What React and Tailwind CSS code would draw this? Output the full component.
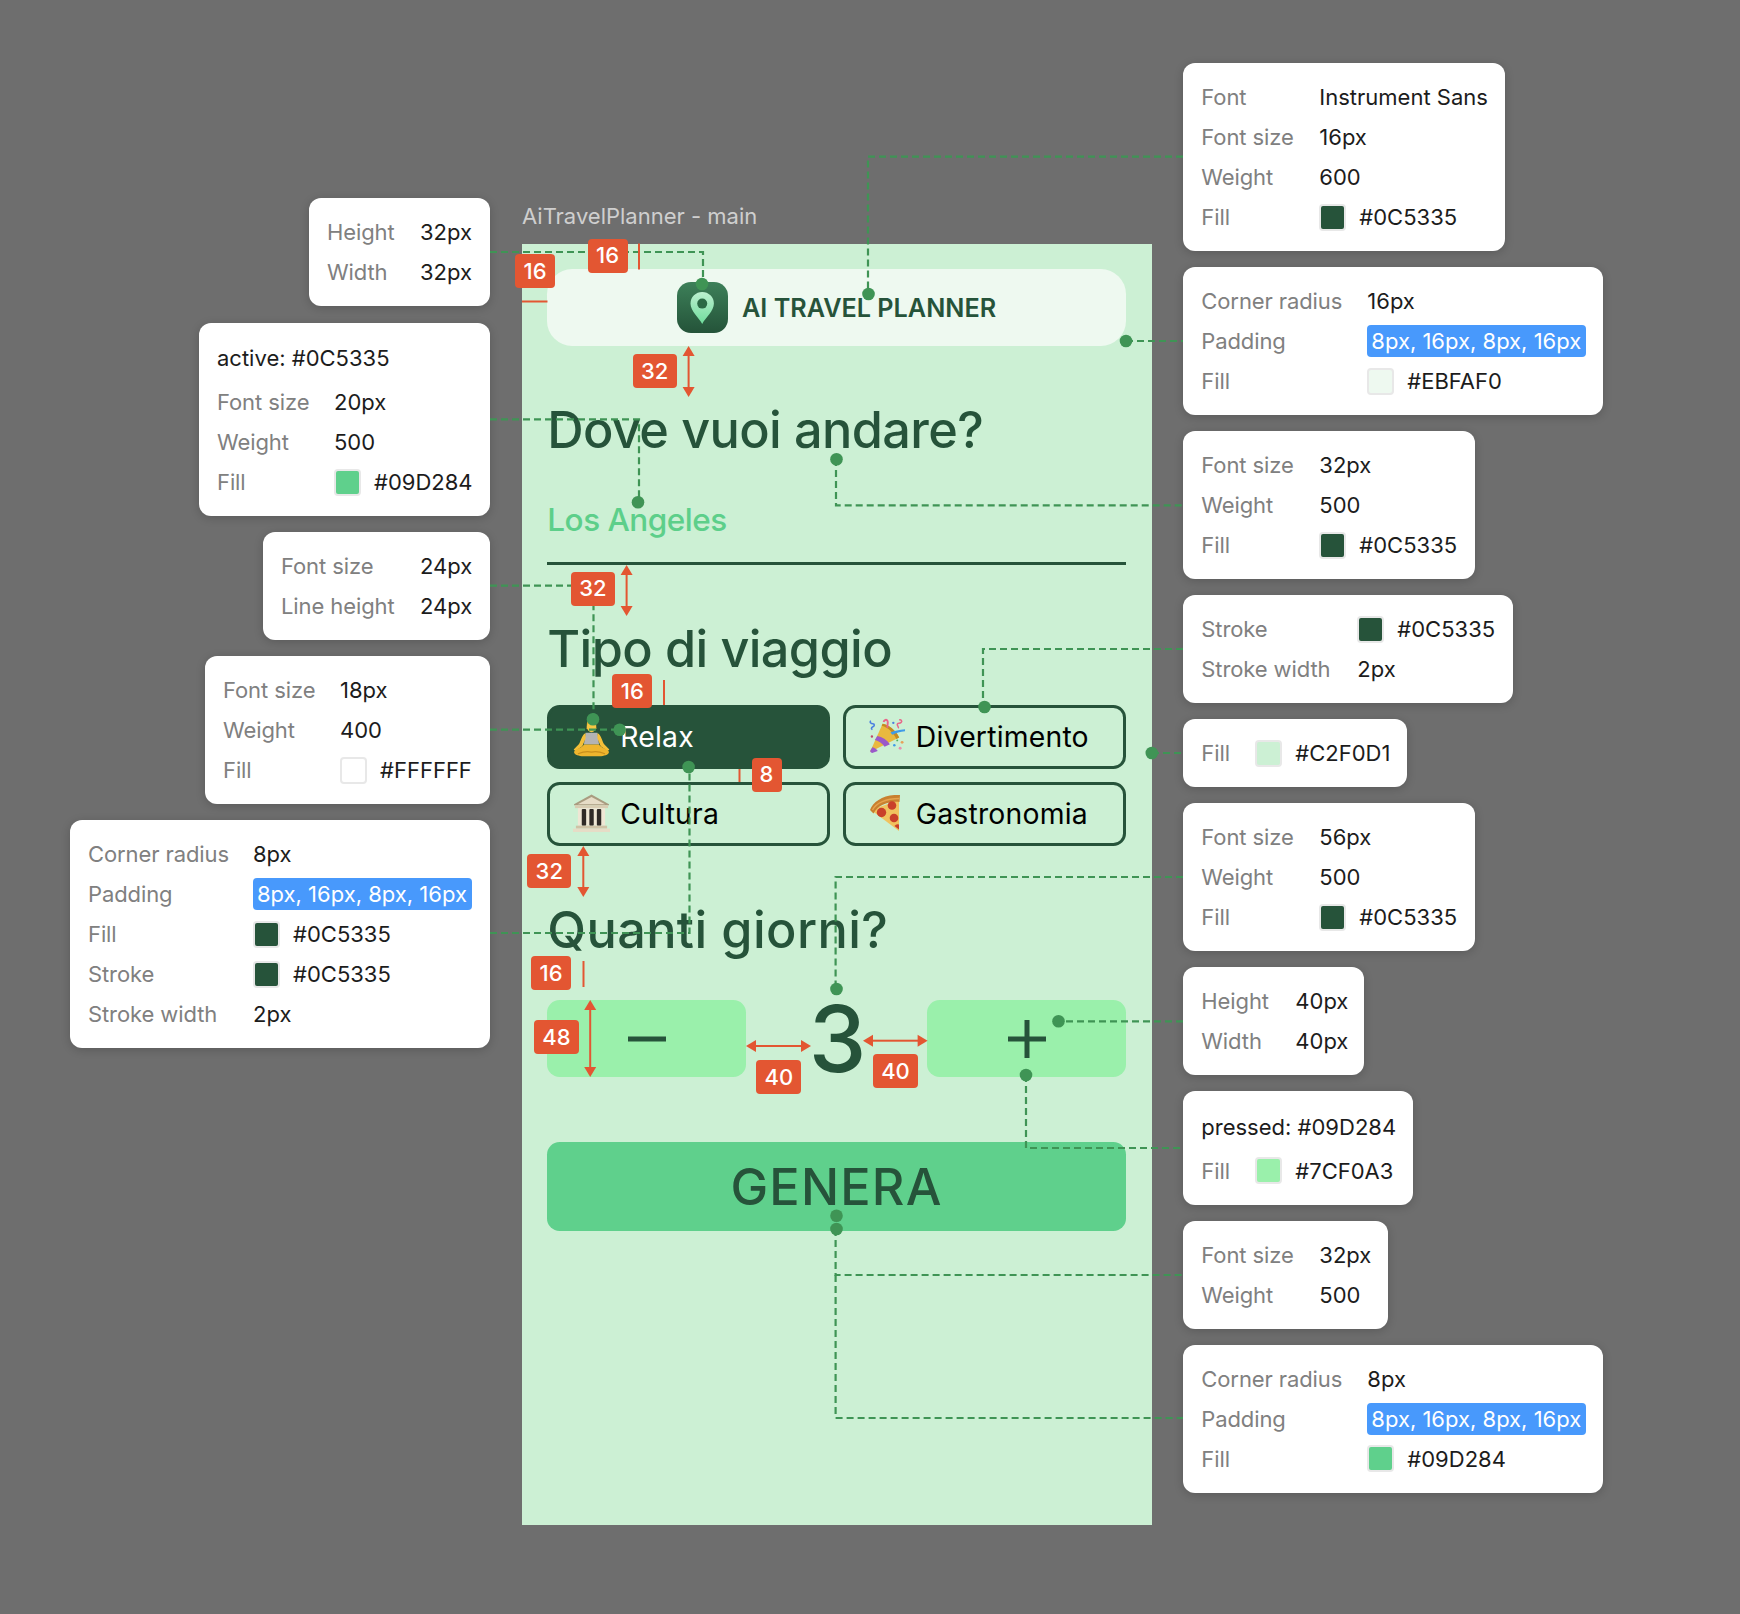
import React from "react";

const INK = "text-[#26533a]";

function Row({ label, children }) {
  return (
    <>
      <span className="tracking-[-0.1px] text-[#808080]">{label}</span>
      <span className="flex items-center whitespace-nowrap text-[#1c1c1c]">{children}</span>
    </>
  );
}

function Swatch({ className }) {
  return <span className={"mr-[13px] h-[27px] w-[27px] rounded-[4px] border-2 border-[#e8e8e8] " + className} />;
}

function Hl() {
  return (
    <span className="flex h-[32px] w-[219px] items-center rounded-[4px] bg-[#4899fc] px-[4px] text-white">
      8px, 16px, 8px, 16px
    </span>
  );
}

function Card({ className, grid, head, children }) {
  return (
    <div className={"rounded-[12px] bg-white px-[18px] py-[14px] text-[22px] leading-[40px] shadow-[0_2px_10px_rgba(0,0,0,0.18)] " + className}>
      {head && <div className="mb-[4px] mt-[1.500px] whitespace-nowrap text-[#1c1c1c]">{head}</div>}
      <div className={"grid auto-rows-[40px] items-center " + grid}>{children}</div>
    </div>
  );
}

function PinIcon() {
  return (
    <svg width="51" height="51" viewBox="0 0 51 51">
      <defs>
        <linearGradient id="ig" x1="0" y1="0" x2="0" y2="1">
          <stop offset="0" stopColor="#3d8059" />
          <stop offset="1" stopColor="#245339" />
        </linearGradient>
        <linearGradient id="pg" x1="0" y1="0" x2="0" y2="1">
          <stop offset="0" stopColor="#bdf0d0" />
          <stop offset="1" stopColor="#6fdc9c" />
        </linearGradient>
      </defs>
      <rect width="51" height="51" rx="14" fill="url(#ig)" />
      <path d="M25.2 42C22 36 13.5 29 13.5 21.6a11.7 11.7 0 0 1 23.4 0C36.9 29 28.4 36 25.2 42Z" fill="url(#pg)" />
      <circle cx="25.2" cy="21.6" r="5" fill="#2b6a45" />
    </svg>
  );
}

function Meditate() {
  return (
    <svg width="37" height="40" viewBox="2 0 33 37">
      <path d="M14.500 3c0-2.500 8-2.500 8 0l.6 8h-9.200z" fill="#e3ac2d" />
      <ellipse cx="18.500" cy="9" rx="4.200" ry="5" fill="#f6c744" />
      <path d="M13 14.500h11l1.500 11h-14z" fill="#b3b3b3" />
      <path d="M13 15c-3 1-4 6-6 10l-5 5 1.500 1.500 6.500-4.500 3-7zM24 15c3 1 4 6 6 10l5 5-1.500 1.500-6.500-4.500-3-7z" fill="#f4bf38" />
      <path d="M11.500 25.500h14c1 3 8 4 9 6.500 .8 2.500-3 4-7 4.200H9.500c-4 -.2-7.800-1.700-7-4.200 1-2.500 8-3.500 9-6.500z" fill="#eeb52e" />
      <path d="M6 34c5-2 9-2.500 12.500-1.500 3.500-1 7.500-.5 12.500 1.500" fill="none" stroke="#c98f1c" strokeWidth="1" />
    </svg>
  );
}

function Temple() {
  return (
    <svg width="38" height="39" viewBox="0 0 38 39">
      <path d="M19 0 37 10v1H1v-1z" fill="#a99c80" />
      <path d="M19 2.500 33 10H5z" fill="#e6dcc6" />
      <rect x="2" y="11" width="34" height="3" fill="#d9cdb3" />
      <rect x="5" y="14" width="28" height="18" fill="#eee6d4" />
      <rect x="9" y="15" width="4.500" height="17" rx="1" fill="#2f2a26" />
      <rect x="16.800" y="15" width="4.500" height="17" rx="1" fill="#2f2a26" />
      <rect x="24.500" y="15" width="4.500" height="17" rx="1" fill="#2f2a26" />
      <rect x="3" y="32" width="32" height="3" fill="#cfc2a6" />
      <rect x="0" y="35" width="38" height="3.500" fill="#e6dcc6" />
    </svg>
  );
}

function Party() {
  return (
    <svg width="39" height="37" viewBox="1 0 38 36">
      <path d="M2 34 15 5c6 1 13 6 17 14z" fill="#e9b93f" />
      <path d="M9.500 17.500c5 1 10 4 13 8.500l-5.500 2.500c-2-3.500-6-6-10-7zM4.500 29c2.500 .5 4.500 2 5.500 4l-5 1.800c-1.500 .2-3-1-2.700-2.500z" fill="#9a5ac9" />
      <path d="M15 5c6 1 13 6 17 14l-3 1.500C26 14 21 9 14 7z" fill="#c48a22" />
      <path d="M23 14c4-2 9-3 15-3.500v2.200c-5 .5-9 2-13 3.500z" fill="#3f9be8" />
      <path d="M16 3c.500-2 3-3 4-1 1 2-.5 4 0 7" fill="none" stroke="#e8668a" strokeWidth="2" />
      <path d="M32 1c2-.5 3.500 1 2 2.500s-4 0-4 2 2 2.500 1 4" fill="none" stroke="#e8668a" strokeWidth="1.500" />
      <path d="M3 2c-2 1 0 3 2 3s2 2 0 3-2 2-.5 3" fill="none" stroke="#4a7fe0" strokeWidth="1.500" />
      <circle cx="26" cy="4" r="1.200" fill="#4a7fe0" />
      <circle cx="27" cy="27" r="1.300" fill="#3f9be8" />
      <circle cx="35" cy="24" r="1.500" fill="#e8a15a" />
      <circle cx="33" cy="30" r="1.500" fill="#e88fb0" />
      <circle cx="30" cy="22" r="1" fill="#4cb05f" />
      <circle cx="4" cy="18" r="1.200" fill="#c0496a" />
    </svg>
  );
}

function Pizza() {
  return (
    <svg width="31" height="37" viewBox="0 0 31 37">
      <path d="M30 36 2 15 30 5z" fill="#f1c25e" />
      <path d="M1 15C4 6 16 -1 31 0l-.5 7C20 6 9 10 4.500 18.500z" fill="#c9802f" />
      <path d="M3.500 15C7 8 17 3.500 30.500 3.500" fill="none" stroke="#e5a34e" strokeWidth="1.500" />
      <circle cx="23" cy="10.500" r="4.300" fill="#c9402a" />
      <circle cx="12.500" cy="17.500" r="4.700" fill="#c9402a" />
      <circle cx="25" cy="23" r="4.300" fill="#c9402a" />
      <path d="M30 29.500a4 4 0 0 0-4.500 1.500l4.500 3.500z" fill="#c9402a" />
    </svg>
  );
}

function Chip({ active, icon, children }) {
  return (
    <button
      className={
        "flex h-[63.7px] items-center gap-[10px] rounded-[12.6px] border-[3px] border-[#26533a] px-[23px] text-left text-[28.35px] tracking-[0.2px] " +
        (active ? "bg-[#26533a] text-white" : "text-black")
      }
    >
      <span className="flex w-[37px] shrink-0 justify-start">{icon}</span>
      <span>{children}</span>
    </button>
  );
}

const dashes = [
  "490,252 703,252 703,284",
  "1183,156.600 868,156.600 868,294",
  "1126,341 1183,341",
  "490,419.300 639,419.300 639,502",
  "836,459 836,505.300 1183,505.300",
  "490,585.700 593.500,585.700 593.500,719",
  "490,729.700 620,729.700",
  "490,933 689.500,933 689.500,767",
  "1183,649 983,649 983,707",
  "1152,753 1183,753",
  "1183,877 835.600,877 835.600,989",
  "1183,1021.300 1058.500,1021.300",
  "1026,1075 1026,1148 1183,1148",
  "835.600,1229 835.600,1275 1183,1275",
  "835.600,1275 835.600,1418 1183,1418",
];

const dots = [
  [702, 284], [868.500, 294], [1126, 341], [638, 502.300], [836.500, 459.300], [593, 719.300],
  [619.700, 729.700], [688.600, 767], [984.500, 707], [1151.800, 753], [836.500, 989], [1058.500, 1021.300],
  [1026, 1075], [836.500, 1215.700], [836.500, 1229],
];

function VArrow({ x, y1, y2 }) {
  return (
    <g fill="#e35632">
      <rect x={x - 1} y={y1 + 6} width="2" height={y2 - y1 - 12} />
      <polygon points={`${x},${y1} ${x + 6},${y1 + 10} ${x - 6},${y1 + 10}`} />
      <polygon points={`${x},${y2} ${x + 6},${y2 - 10} ${x - 6},${y2 - 10}`} />
    </g>
  );
}

function HArrow({ y, x1, x2 }) {
  return (
    <g fill="#e35632">
      <rect x={x1 + 6} y={y - 1} width={x2 - x1 - 12} height="2" />
      <polygon points={`${x1},${y} ${x1 + 10},${y - 6} ${x1 + 10},${y + 6}`} />
      <polygon points={`${x2},${y} ${x2 - 10},${y - 6} ${x2 - 10},${y + 6}`} />
    </g>
  );
}

function Overlay() {
  return (
    <svg className="pointer-events-none absolute inset-0" width="1740" height="1614" viewBox="0 0 1740 1614">
      <g fill="none" stroke="#3f9455" strokeWidth="2.200" strokeDasharray="7 4">
        {dashes.map((p) => (
          <polyline key={p} points={p} />
        ))}
      </g>
      <g fill="#e35632">
        <rect x="638" y="243.500" width="2" height="26" />
        <rect x="522" y="300.500" width="25.500" height="2" />
        <rect x="663" y="680" width="2" height="25" />
        <rect x="738.500" y="769" width="2" height="13" />
        <rect x="582.500" y="961" width="2" height="26" />
      </g>
      <VArrow x={688.600} y1={346} y2={397} />
      <VArrow x={626.600} y1={565} y2={616} />
      <VArrow x={583.300} y1={846} y2={897} />
      <VArrow x={590.200} y1={1000} y2={1077} />
      <HArrow y={1046} x1={746} x2={811} />
      <HArrow y={1040.700} x1={863} x2={927.600} />
      <g fill="#3f9455">
        {dots.map(([x, y]) => (
          <circle key={x + "-" + y} cx={x} cy={y} r="6.300" />
        ))}
      </g>
    </svg>
  );
}

function Badge({ className, children }) {
  return (
    <div className={"absolute flex h-[34px] items-center justify-center rounded-[4px] bg-[#e35632] text-[22px] font-medium text-white " + className}>
      {children}
    </div>
  );
}

export default function App() {
  return (
    <div className="relative flex h-[1614px] w-[1740px] overflow-hidden bg-[#6e6e6e] font-['Inter',sans-serif]">
      {/* left notes */}
      <div className="flex w-[490px] shrink-0 flex-col items-end gap-[16px] pt-[198.300px]">
        <Card className="mb-[0.500px] w-[181px]" grid="grid-cols-[93px_auto]">
          <Row label="Height">32px</Row>
          <Row label="Width">32px</Row>
        </Card>
        <Card className="w-[291px]" grid="grid-cols-[117px_auto]" head="active: #0C5335">
          <Row label="Font size">20px</Row>
          <Row label="Weight">500</Row>
          <Row label="Fill"><Swatch className="bg-[#5fd08c]" />#09D284</Row>
        </Card>
        <Card className="w-[227px]" grid="grid-cols-[139px_auto]">
          <Row label="Font size">24px</Row>
          <Row label="Line height">24px</Row>
        </Card>
        <Card className="w-[285px]" grid="grid-cols-[117px_auto]">
          <Row label="Font size">18px</Row>
          <Row label="Weight">400</Row>
          <Row label="Fill"><Swatch className="bg-white" />#FFFFFF</Row>
        </Card>
        <Card className="w-[420px]" grid="grid-cols-[165px_auto]">
          <Row label="Corner radius">8px</Row>
          <Row label="Padding"><Hl /></Row>
          <Row label="Fill"><Swatch className="bg-[#26533a]" />#0C5335</Row>
          <Row label="Stroke"><Swatch className="bg-[#26533a]" />#0C5335</Row>
          <Row label="Stroke width">2px</Row>
        </Card>
      </div>

      {/* frame */}
      <div className="ml-[32px] w-[630px] shrink-0 pt-[201px]">
        <div className="mb-[13px] h-[30px] text-[22px] leading-[30px] text-[#cfcfcf]">AiTravelPlanner - main</div>
        <div className={"h-[1281px] bg-[#ccf0d4] pl-[25.300px] pr-[26.200px] pt-[25.300px] " + INK}>
          <header className="flex h-[76.700px] items-center justify-center gap-[14px] rounded-[25.200px] bg-[#eef9f0]">
            <PinIcon />
            <span className="pt-[3px] text-[25.200px] font-semibold">AI TRAVEL PLANNER</span>
          </header>

          <h2 className="mt-[50.400px] pt-[3px] text-[50.400px] font-medium leading-[61.500px] tracking-[-0.6px]">Dove vuoi andare?</h2>
          <div className="h-[104px] border-b-[3px] border-[#26533a] pt-[40px] text-[31.500px] font-medium leading-[38px] tracking-[-0.5px] text-[#5dcf8a]">
            Los Angeles
          </div>

          <h2 className="mt-[50.400px] pt-[3px] text-[50.400px] font-medium leading-[61.500px] tracking-[-0.6px]">Tipo di viaggio</h2>
          <div className="mt-[25.200px] grid grid-cols-2 gap-x-[12.600px] gap-y-[13.500px]">
            <Chip active icon={<Meditate />}>Relax</Chip>
            <Chip icon={<Party />}>Divertimento</Chip>
            <Chip icon={<Temple />}>Cultura</Chip>
            <Chip icon={<Pizza />}>Gastronomia</Chip>
          </div>

          <h2 className="mt-[50.400px] pt-[3px] text-[50.400px] font-medium leading-[61.500px] tracking-[0.4px]">Quanti giorni?</h2>
          <div className="mt-[25.200px] flex h-[105.500px] items-center gap-[63px]">
            <button className="flex h-[76.700px] flex-1 items-center justify-center rounded-[12.600px] bg-[#9af0ab]">
              <svg width="38" height="6" viewBox="0 0 38 6"><rect y="0.500" width="38" height="5" fill="#26533a" /></svg>
            </button>
            <span className="w-[55.600px] text-center text-[92px] font-medium leading-[103px]">3</span>
            <button className="flex h-[76.700px] flex-1 items-center justify-center rounded-[12.600px] bg-[#9af0ab]">
              <svg width="38" height="38" viewBox="0 0 38 38"><path d="M0 19h38M19 0v38" fill="none" stroke="#26533a" strokeWidth="5" /></svg>
            </button>
          </div>

          <button className="mt-[50.400px] flex h-[89.600px] w-full items-center justify-center rounded-[12.600px] bg-[#5fd08c] text-[50.400px] font-medium tracking-[1.2px]">
            GENERA
          </button>
        </div>
      </div>

      {/* right notes */}
      <div className="ml-[31.300px] flex flex-col items-start gap-[16px] pt-[63.300px]">
        <Card className="w-[322px]" grid="grid-cols-[118px_auto]">
          <Row label="Font">Instrument Sans</Row>
          <Row label="Font size">16px</Row>
          <Row label="Weight">600</Row>
          <Row label="Fill"><Swatch className="bg-[#26533a]" />#0C5335</Row>
        </Card>
        <Card className="w-[420px]" grid="grid-cols-[166px_auto]">
          <Row label="Corner radius">16px</Row>
          <Row label="Padding"><Hl /></Row>
          <Row label="Fill"><Swatch className="bg-[#eef9f0]" />#EBFAF0</Row>
        </Card>
        <Card className="w-[292px]" grid="grid-cols-[118px_auto]">
          <Row label="Font size">32px</Row>
          <Row label="Weight">500</Row>
          <Row label="Fill"><Swatch className="bg-[#26533a]" />#0C5335</Row>
        </Card>
        <Card className="w-[330px]" grid="grid-cols-[156px_auto]">
          <Row label="Stroke"><Swatch className="bg-[#26533a]" />#0C5335</Row>
          <Row label="Stroke width">2px</Row>
        </Card>
        <Card className="w-[224px]" grid="grid-cols-[54px_auto]">
          <Row label="Fill"><Swatch className="bg-[#ccf0d4]" />#C2F0D1</Row>
        </Card>
        <Card className="w-[292px]" grid="grid-cols-[118px_auto]">
          <Row label="Font size">56px</Row>
          <Row label="Weight">500</Row>
          <Row label="Fill"><Swatch className="bg-[#26533a]" />#0C5335</Row>
        </Card>
        <Card className="w-[181px]" grid="grid-cols-[94px_auto]">
          <Row label="Height">40px</Row>
          <Row label="Width">40px</Row>
        </Card>
        <Card className="w-[230px]" grid="grid-cols-[54px_auto]" head="pressed: #09D284">
          <Row label="Fill"><Swatch className="bg-[#9af0ab]" />#7CF0A3</Row>
        </Card>
        <Card className="w-[205px]" grid="grid-cols-[118px_auto]">
          <Row label="Font size">32px</Row>
          <Row label="Weight">500</Row>
        </Card>
        <Card className="w-[420px]" grid="grid-cols-[166px_auto]">
          <Row label="Corner radius">8px</Row>
          <Row label="Padding"><Hl /></Row>
          <Row label="Fill"><Swatch className="bg-[#5fd08c]" />#09D284</Row>
        </Card>
      </div>

      <Overlay />

      <Badge className="left-[587.500px] top-[238.700px] w-[40px]">16</Badge>
      <Badge className="left-[515px] top-[254px] w-[40px]">16</Badge>
      <Badge className="left-[632.700px] top-[354px] w-[44px]">32</Badge>
      <Badge className="left-[571px] top-[571.700px] w-[44px]">32</Badge>
      <Badge className="left-[612.300px] top-[674.300px] w-[40px]">16</Badge>
      <Badge className="left-[751.500px] top-[757.700px] w-[30px]">8</Badge>
      <Badge className="left-[527.300px] top-[854px] w-[44px]">32</Badge>
      <Badge className="left-[531px] top-[956.300px] w-[40px]">16</Badge>
      <Badge className="left-[534px] top-[1020.300px] w-[45px]">48</Badge>
      <Badge className="left-[756.300px] top-[1060.300px] w-[45px]">40</Badge>
      <Badge className="left-[873px] top-[1054.300px] w-[45px]">40</Badge>
    </div>
  );
}
